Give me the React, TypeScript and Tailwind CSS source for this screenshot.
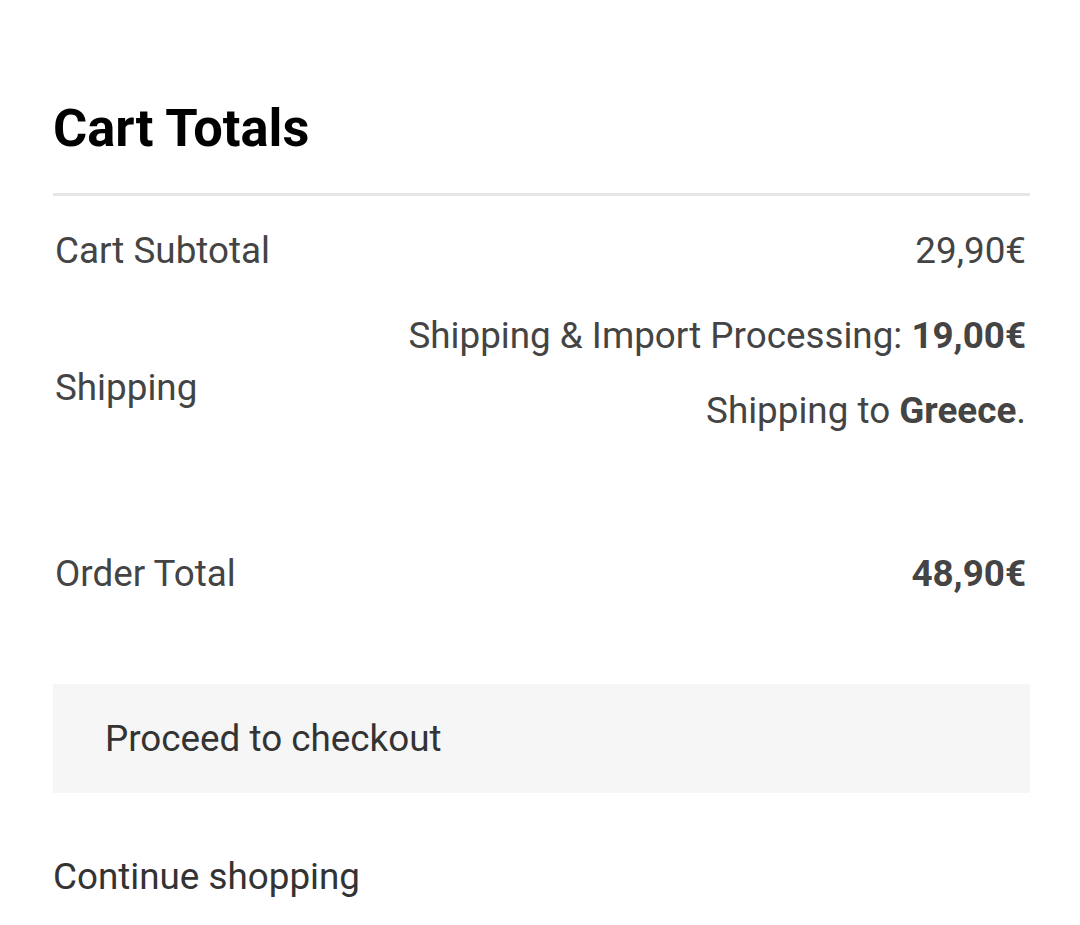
export default function App() {
  return (
    <div className="min-h-screen bg-white px-[53px] pt-[96px] font-['Roboto','Noto_Sans',sans-serif] text-[#444]">
      <h1 className="text-[52.4px] font-bold leading-[64px] text-black">Cart Totals</h1>
      <div className="mt-[33px] h-[3px] w-[977px] bg-[#e6e6e6]" />

      <table className="w-[977px] text-[36.8px] leading-[44px]">
        <tbody>
          <tr>
            <td className="pl-[2px] pr-[4px] pt-[33px] pb-[41px] align-middle">Cart Subtotal</td>
            <td className="pl-[2px] pr-[4px] pt-[33px] pb-[41px] text-right align-middle">29,90€</td>
          </tr>
          <tr>
            <td className="pl-[2px] pr-[4px] align-middle">Shipping</td>
            <td className="pl-[2px] pr-[4px] text-right align-middle">
              <p>
                Shipping &amp; Import Processing: <span className="font-bold">19,00€</span>
              </p>
              <p className="mt-[31px] mb-[28px]">
                Shipping to <span className="font-bold">Greece</span>.
              </p>
            </td>
          </tr>
          <tr>
            <td className="pl-[2px] pr-[4px] pt-[91px] align-middle">Order Total</td>
            <td className="pl-[2px] pr-[4px] pt-[91px] text-right align-middle font-bold">48,90€</td>
          </tr>
        </tbody>
      </table>

      <button className="mt-[88px] flex h-[109px] w-[977px] items-center bg-[#f6f6f6] pl-[52px] text-[36.8px] text-[#333]">
        Proceed to checkout
      </button>

      <a className="mt-[56px] block text-[36.8px] text-[#333]">Continue shopping</a>
    </div>
  );
}
